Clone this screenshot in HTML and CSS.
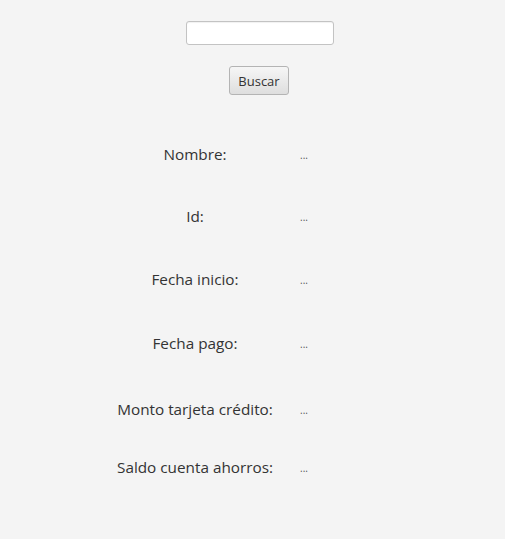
FILE: index.html
```html
<!DOCTYPE html>
<html lang="es">
<head>
<meta charset="utf-8">
<title>Buscar</title>
<link rel="stylesheet" href="styles.css">
</head>
<body>
<div class="search">
  <input class="search-input" type="text">
  <button class="search-btn" type="button">Buscar</button>
</div>
<div class="details">
  <div class="label">Nombre:</div><div class="value">...</div>
  <div class="label">Id:</div><div class="value">...</div>
  <div class="label">Fecha inicio:</div><div class="value">...</div>
  <div class="label">Fecha pago:</div><div class="value">...</div>
  <div class="label">Monto tarjeta crédito:</div><div class="value">...</div>
  <div class="label">Saldo cuenta ahorros:</div><div class="value">...</div>
</div>
</body>
</html>
```
FILE: styles.css
```css
html, body {
  margin: 0;
  padding: 0;
  background: #f4f4f4;
}
body {
  width: 505px;
  height: 539px;
  font-family: "Open Sans", "Noto Sans", sans-serif;
  color: #333333;
  overflow: hidden;
}
.search {
  width: 148px;
  margin: 21px 0 0 186px;
  display: flex;
  flex-direction: column;
  align-items: center;
  gap: 21px;
}
.search-input {
  box-sizing: border-box;
  width: 148px;
  height: 24px;
  margin: 0;
  padding: 0 6px;
  border: 1px solid #c3c3c3;
  border-radius: 3px;
  background: #ffffff;
  box-shadow: inset 0 1px 1px rgba(0,0,0,0.06);
  outline: none;
}
.search-btn {
  box-sizing: border-box;
  width: 60px;
  height: 29px;
  margin: 0 2px 0 0;
  padding: 0;
  border: 1px solid #b4b4b4;
  border-radius: 3px;
  background: linear-gradient(#f6f6f6, #dedede);
  font-family: "Open Sans", "Noto Sans", sans-serif;
  font-size: 13px;
  color: #333333;
}
.details {
  margin-top: 49px;
  display: grid;
  grid-template-columns: 100px 190px 10px auto;
  grid-template-rows: 62px 63px 64px 66px 58px 30px;
  font-size: 15.3px;
  line-height: 20px;
}
.label {
  grid-column: 2;
  text-align: center;
  white-space: nowrap;
}
.value {
  grid-column: 4;
  font-size: 10px;
  color: #555555;
  line-height: 20px;
  padding-top: 1px;
}
```
